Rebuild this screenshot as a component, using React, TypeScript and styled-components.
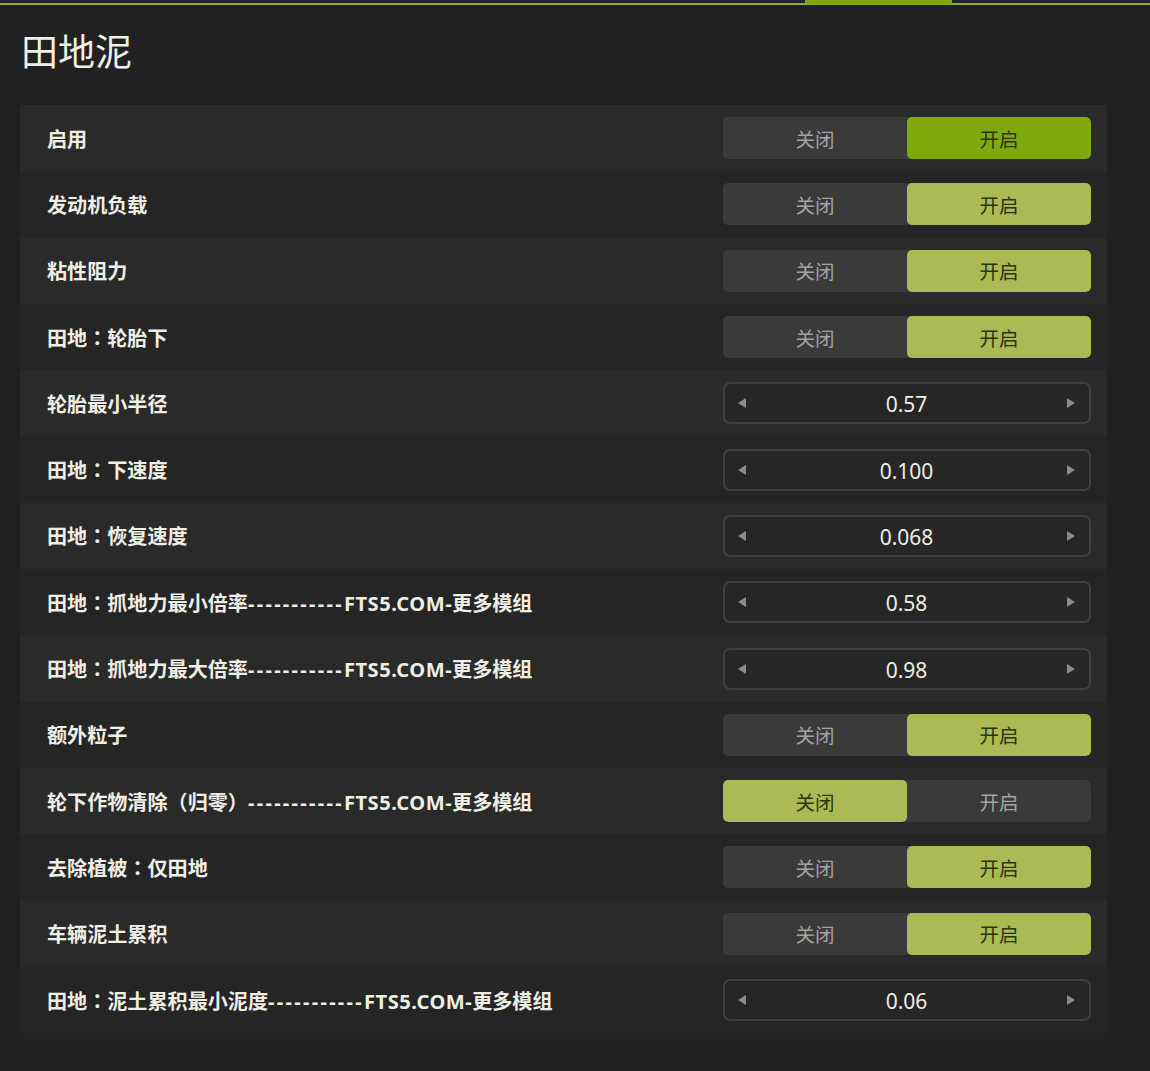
import React from 'react';
import styled, { createGlobalStyle } from 'styled-components';

const Global = createGlobalStyle`
  html, body {
    margin: 0;
    padding: 0;
    background: #212121;
  }
  body {
    font-family: "Noto Sans CJK SC", "Noto Sans", sans-serif;
    color: #efeee4;
  }
`;

const Page = styled.div`
  width: 1150px;
  min-height: 1071px;
  background: #212121;
`;

const TopBar = styled.div`
  position: relative;
  height: 5px;
  background: #23222e;
  border-bottom: 2px solid #8cac24;
  box-sizing: border-box;
`;

const TopTab = styled.div`
  position: absolute;
  left: 805px;
  top: 0;
  width: 147px;
  height: 5px;
  background: #82a80f;
`;

const Content = styled.div`
  padding: 0 43px 0 20px;
`;

const Title = styled.h1`
  margin: 0;
  padding: 19px 0 0 1px;
  height: 100px;
  box-sizing: border-box;
  font-size: 37px;
  font-weight: 400;
  line-height: 52px;
  color: #f0efe6;
`;

const List = styled.div`
  display: flex;
  flex-direction: column;
`;

const Row = styled.div<{ $alt: boolean }>`
  height: 66.3px;
  display: flex;
  align-items: center;
  justify-content: space-between;
  padding: 0 16px 0 27px;
  background: ${(p) => (p.$alt ? '#252525' : '#2a2a2a')};
`;

const Label = styled.div`
  font-size: 20.1px;
  font-weight: 700;
  color: #efeee4;
  white-space: nowrap;
`;

const Colon = styled.span`
  font-family: "Noto Sans CJK TC", "Noto Sans CJK SC", sans-serif;
`;

const Dashes = styled.span`
  font-family: "Noto Sans", sans-serif;
  letter-spacing: 2.3px;
`;

const Site = styled.span`
  font-family: "Noto Sans", sans-serif;
  letter-spacing: 0.5px;
`;

const Toggle = styled.div`
  width: 368px;
  height: 42px;
  display: flex;
  background: #3a3a3a;
  border-radius: 5px;
  overflow: hidden;
`;

const ToggleOption = styled.div<{ $on: boolean; $bright: boolean }>`
  flex: 1;
  display: flex;
  align-items: center;
  justify-content: center;
  font-size: 19.5px;
  border-radius: 5px;
  color: ${(p) => (p.$on ? '#2c3410' : '#a3a3a0')};
  background: ${(p) => (p.$on ? (p.$bright ? '#80a90d' : '#abba55') : 'transparent')};
`;

const Stepper = styled.div`
  width: 368px;
  height: 42px;
  box-sizing: border-box;
  border: 2px solid #3f3f3f;
  border-radius: 7px;
  background: #262626;
  display: flex;
  align-items: center;
  justify-content: space-between;
  padding: 0 14px 0 13px;
`;

const Arrow = styled.span<{ $dir: 'left' | 'right' }>`
  width: 0;
  height: 0;
  border-top: 5px solid transparent;
  border-bottom: 5px solid transparent;
  ${(p) =>
    p.$dir === 'left'
      ? 'border-right: 8px solid #8a8a8a;'
      : 'border-left: 8px solid #8a8a8a;'}
`;

const Value = styled.span`
  font-family: "Noto Sans", sans-serif;
  font-size: 21px;
  line-height: 1;
  padding-top: 3px;
  color: #eeede6;
`;

type Item =
  | { label: string; site?: boolean; kind: 'toggle'; on: boolean; bright?: boolean }
  | { label: string; site?: boolean; kind: 'number'; value: string };

const items: Item[] = [
  { label: '启用', kind: 'toggle', on: true, bright: true },
  { label: '发动机负载', kind: 'toggle', on: true },
  { label: '粘性阻力', kind: 'toggle', on: true },
  { label: '田地：轮胎下', kind: 'toggle', on: true },
  { label: '轮胎最小半径', kind: 'number', value: '0.57' },
  { label: '田地：下速度', kind: 'number', value: '0.100' },
  { label: '田地：恢复速度', kind: 'number', value: '0.068' },
  { label: '田地：抓地力最小倍率', site: true, kind: 'number', value: '0.58' },
  { label: '田地：抓地力最大倍率', site: true, kind: 'number', value: '0.98' },
  { label: '额外粒子', kind: 'toggle', on: true },
  { label: '轮下作物清除（归零）', site: true, kind: 'toggle', on: false },
  { label: '去除植被：仅田地', kind: 'toggle', on: true },
  { label: '车辆泥土累积', kind: 'toggle', on: true },
  { label: '田地：泥土累积最小泥度', site: true, kind: 'number', value: '0.06' },
];

// centre the full-width colon the way the game font does
const renderLabel = (text: string) =>
  text.split('：').map((part, i) => (
    <React.Fragment key={i}>
      {i > 0 && <Colon>：</Colon>}
      {part}
    </React.Fragment>
  ));

export default function App() {
  return (
    <Page>
      <Global />
      <TopBar>
        <TopTab />
      </TopBar>
      <Content>
        <Title>田地泥</Title>
        <List>
          {items.map((item, i) => (
            <Row key={i} $alt={i % 2 === 1}>
              <Label>
                {renderLabel(item.label)}
                {item.site && (
                  <>
                    <Dashes>-----------</Dashes>
                    <Site>FTS5.COM-</Site>更多模组
                  </>
                )}
              </Label>
              {item.kind === 'toggle' ? (
                <Toggle>
                  <ToggleOption $on={!item.on} $bright={!!item.bright}>关闭</ToggleOption>
                  <ToggleOption $on={item.on} $bright={!!item.bright}>开启</ToggleOption>
                </Toggle>
              ) : (
                <Stepper>
                  <Arrow $dir="left" />
                  <Value>{item.value}</Value>
                  <Arrow $dir="right" />
                </Stepper>
              )}
            </Row>
          ))}
        </List>
      </Content>
    </Page>
  );
}
